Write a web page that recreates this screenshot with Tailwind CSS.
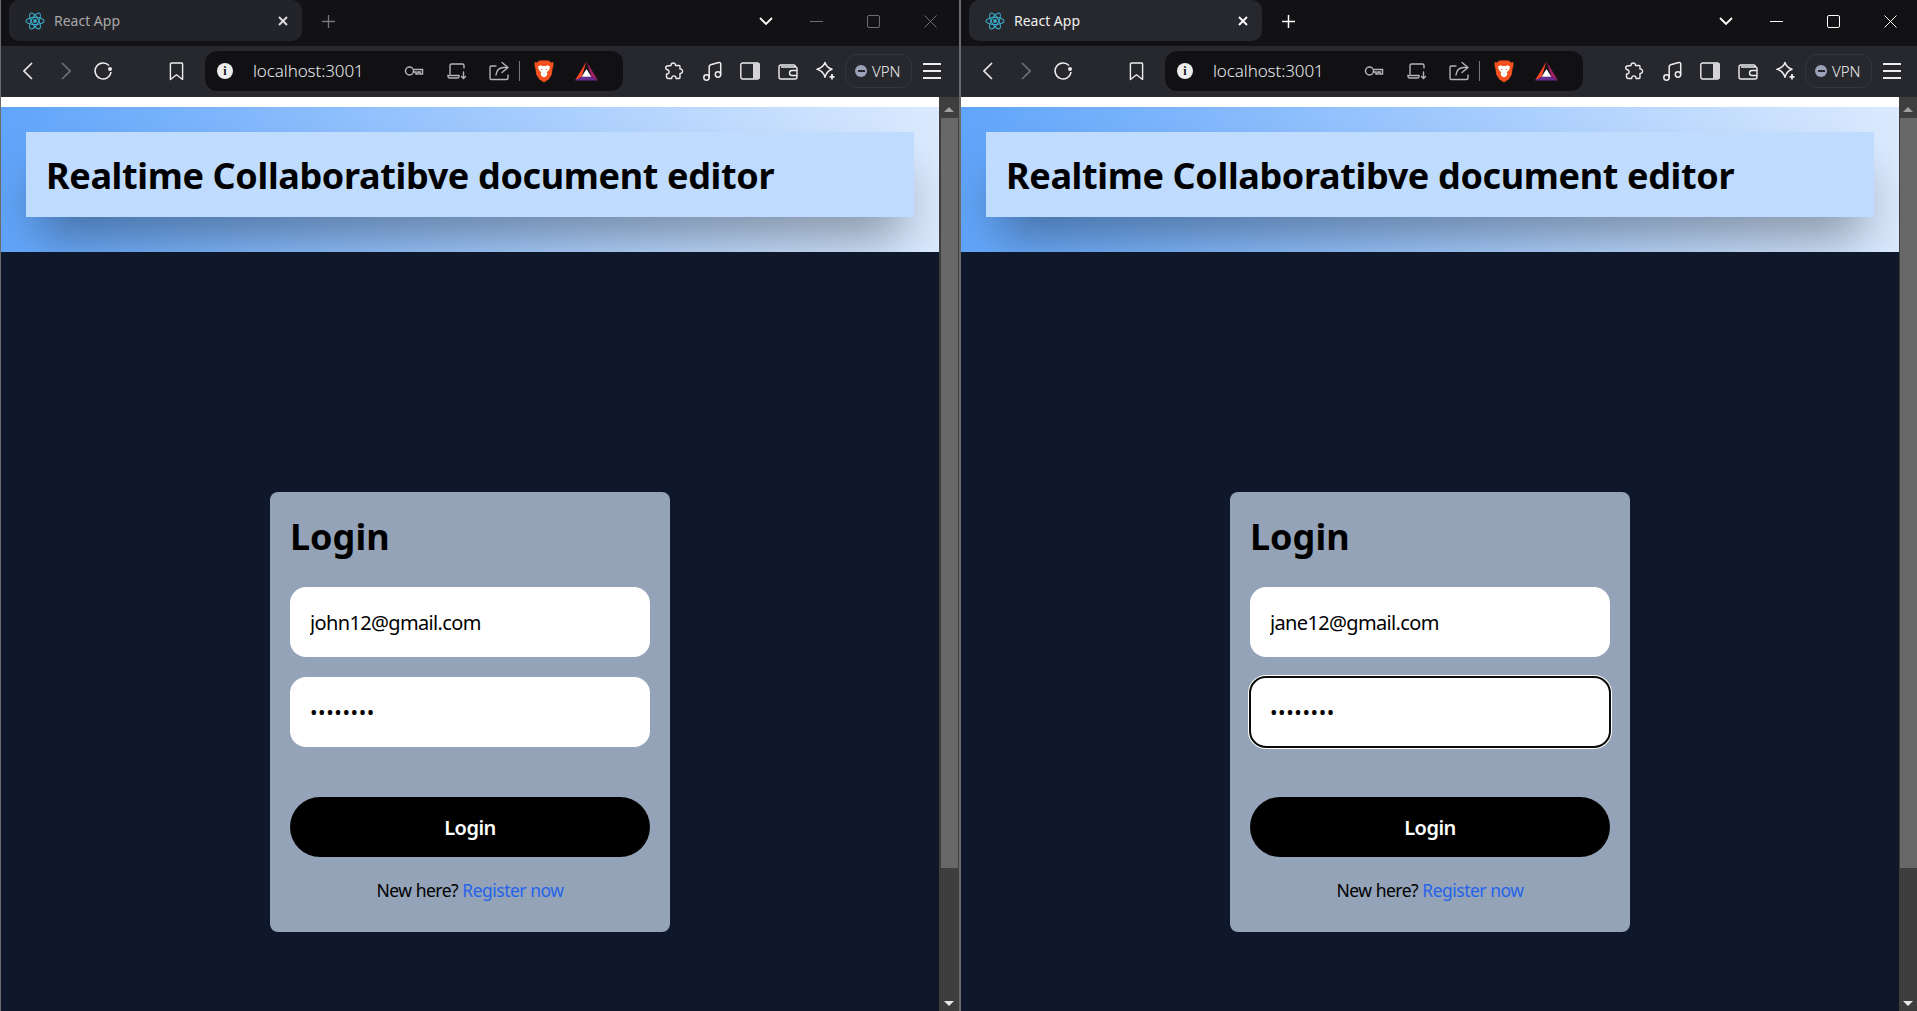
<!DOCTYPE html>
<html lang="en">
<head>
    <meta charset="UTF-8">
    <title>React App</title>
    <script src="https://cdn.jsdelivr.net/npm/@tailwindcss/browser@4"></script>
</head>
<body class="bg-[#6b6b6b] overflow-hidden font-['Noto_Sans',sans-serif]">
    <!-- Shared icons -->
    <svg class="hidden">
        <symbol id="react" viewBox="0 0 20 20">
            <g fill="none" stroke="#3aa6c4" stroke-width="1.1">
                <ellipse cx="10" cy="10" rx="9" ry="3.6"/>
                <ellipse cx="10" cy="10" rx="9" ry="3.6" transform="rotate(60 10 10)"/>
                <ellipse cx="10" cy="10" rx="9" ry="3.6" transform="rotate(120 10 10)"/>
            </g>
            <circle cx="10" cy="10" r="2" fill="#3aa6c4"/>
        </symbol>
        <symbol id="key" viewBox="0 0 20 14" fill="none" stroke="currentColor" stroke-width="1.5">
            <circle cx="5.5" cy="7" r="4"/>
            <path d="M9.5 5.5h9v4.5h-2.5v-2h-2v2h-2v-2h-2.5"/>
        </symbol>
        <symbol id="laptop" viewBox="0 0 20 18" fill="none" stroke="currentColor" stroke-width="1.4" stroke-linecap="round">
            <path d="M17 6V3.500A1.500 1.500 0 0 0 15.500 2H4.500a1.500 1.500 0 0 0-1.500 1.500V12M1 13.500h11v1a1.500 1.500 0 0 1-1.500 1.500H2.500a1.500 1.500 0 0 1-1.500-1.500z"/>
            <path d="M16.500 10v6M14.500 14.500l2 2 2-2"/>
        </symbol>
        <symbol id="share" viewBox="0 0 20 20" fill="none" stroke="currentColor" stroke-width="1.4" stroke-linecap="round" stroke-linejoin="round">
            <path d="M7 5H2.500a1.500 1.500 0 0 0-1.500 1.500V17a1.500 1.500 0 0 0 1.500 1.500H17.500a1.500 1.500 0 0 0 1.500-1.500v-3"/>
            <path d="M13 1.500l6 5-6 5M19 6.500h-4c-5 0-7.500 3-8 7.500"/>
        </symbol>
        <symbol id="brave" viewBox="0 0 20 24">
            <path d="M5 .5h10l2 2.200 2.500-.5.500 3-1 3.300-1 7-3 4.500-5 3.500-5-3.500-3-4.500-1-7-1-3.300.5-3 2.500.5z" fill="#f4511e"/>
            <path d="M3.500 7l3-1.500 2 1 1.500-.5 1.500.5 2-1 3 1.500-1.500 4-2 1.500.5 3-2 2-1.500.5-1.500-.5-2-2 .5-3-2-1.500z" fill="#fff"/>
            <path d="M6.500 9.500h2.200l-1 1zM11.300 9.500h2.200l-1.200 1z" fill="#f4511e"/>
        </symbol>
        <symbol id="bat" viewBox="0 0 24 20">
            <path d="M12 0L0 20l7-4z" fill="#ff4724"/>
            <path d="M12 0l12 20-7-4z" fill="#9e1f63"/>
            <path d="M0 20h24l-7-4H7z" fill="#662d91"/>
            <path d="M12 8l5 8H7z" fill="#fff"/>
        </symbol>
        <symbol id="puzzle" viewBox="0 0 20 20" fill="none" stroke="currentColor" stroke-width="1.4" stroke-linejoin="round">
            <path d="M7 4.500C7 1.500 11.500 1 11.500 4.500h3.500a1 1 0 0 1 1 1V8c3-.5 3.800 4.500 0 4.500v4a1 1 0 0 1-1 1h-3c.3-3.500-4.500-3.500-4.300 0H4.500a2 2 0 0 1-2-2v-2.500c3.500.5 3.500-4.800 0-4.500a2 2 0 0 1 .5-3.500z"/>
        </symbol>
        <symbol id="music" viewBox="0 0 20 20" fill="none" stroke="currentColor" stroke-width="1.5">
            <circle cx="3.500" cy="16.500" r="2.700"/>
            <circle cx="15" cy="13.500" r="2.700"/>
            <path d="M6.200 16.500V5.500c0-1 .5-1.500 1.500-1.800l8-2.200c1-.3 2 0 2 1.500v10.500"/>
        </symbol>
        <symbol id="sidebar" viewBox="0 0 20 18">
            <rect x=".8" y="1" width="18.400" height="16" rx="2" fill="none" stroke="currentColor" stroke-width="1.400"/>
            <path d="M13 1h5a2 2 0 0 1 2 2v12a2 2 0 0 1-2 2h-5z" fill="#d4d4d6"/>
        </symbol>
        <symbol id="wallet" viewBox="0 0 20 18" fill="none" stroke="currentColor" stroke-width="1.400">
            <path d="M1 5a2 2 0 0 1 2-2h12.500a2 2 0 0 1 2 1.500M1 4.500V15a2 2 0 0 0 2 2h14a2 2 0 0 0 2-2V6.500a1.500 1.500 0 0 0-1.500-1.500H3"/>
            <path d="M19 8.500h-5a2 2 0 0 0 0 5h5"/>
        </symbol>
        <symbol id="leo" viewBox="0 0 20 20" fill="none" stroke="currentColor" stroke-width="1.500" stroke-linejoin="round">
            <path d="M9 1.500c1.200 4 2.800 5.500 7 6.800-3.500 1.200-5.800 3.500-7 8-1.200-4.500-3.500-6.800-8-8 4.500-1.300 6.800-2.800 8-6.800z"/>
            <path d="M16 13v5.500M13.500 15.800h5" stroke-width="1.800"/>
        </symbol>
        <symbol id="reload" viewBox="0 0 20 20" fill="none">
            <path d="M16 4.500A8 8 0 1 0 18 11" stroke="currentColor" stroke-width="1.500"/>
            <circle cx="17" cy="8" r="2" fill="currentColor"/>
        </symbol>
        <symbol id="bookmark" viewBox="0 0 16 20" fill="none" stroke="currentColor" stroke-width="1.500" stroke-linejoin="round">
            <path d="M2.500 1h11a1 1 0 0 1 1 1v16.500L8 13.500 1.500 18.500V2a1 1 0 0 1 1-1z"/>
        </symbol>
    </svg>

    <div class="flex h-screen pl-px gap-[2px]">
        <!-- Left window (inactive) -->
        <section class="w-[958px] shrink-0 flex flex-col bg-white overflow-hidden">
            <div class="h-[46px] shrink-0 bg-[#121215] flex items-center pl-2 text-[#a8a8aa]">
                <div class="w-[293px] h-[41px] -mt-[5px] rounded-[10px] bg-[#232429] flex items-center pl-4 pr-[14px]">
                    <svg class="w-[20px] h-[20px]"><use href="#react"/></svg>
                    <span class="ml-[9px] text-[14px] flex-1">React App</span>
                    <svg class="w-[10px] h-[10px] text-[#e0e0e0]" viewBox="0 0 10 10" fill="none" stroke="currentColor" stroke-width="1.800"><path d="M1 1l8 8M9 1l-8 8"/></svg>
                </div>
                <svg class="w-[13px] h-[13px] ml-[20px] -mt-[3px] text-[#77777a]" viewBox="0 0 13 13" fill="none" stroke="currentColor" stroke-width="1.300"><path d="M6.500 0v13M0 6.500h13"/></svg>
                <svg class="w-[14px] h-[9px] ml-auto -mt-[3px] text-white" viewBox="0 0 14 9" fill="none" stroke="currentColor" stroke-width="1.800"><path d="M1 1l6 6 6-6"/></svg>
                <div class="w-[13px] h-px ml-[37px] -mt-[3px] bg-[#6e6e70]"></div>
                <div class="w-[13px] h-[13px] ml-[44px] -mt-[3px] rounded-[2px] border border-[#6e6e70]"></div>
                <svg class="w-[13px] h-[13px] ml-[44px] mr-[22px] -mt-[3px] text-[#6e6e70]" viewBox="0 0 13 13" fill="none" stroke="currentColor" stroke-width="1"><path d="M.5.500l12 12M12.500.500l-12 12"/></svg>
            </div>
            <div class="h-[51px] shrink-0 bg-[#27282d] flex items-center pl-2 pb-px text-[#ededed]">
                <div class="w-[38px] flex justify-center"><svg class="w-[10px] h-[18px]" viewBox="0 0 10 18" fill="none" stroke="currentColor" stroke-width="1.600"><path d="M9 1L1 9l8 8"/></svg></div>
                <div class="w-[38px] flex justify-center text-[#6f7074]"><svg class="w-[10px] h-[18px]" viewBox="0 0 10 18" fill="none" stroke="currentColor" stroke-width="1.600"><path d="M1 1l8 8-8 8"/></svg></div>
                <div class="w-[36px] flex justify-center"><svg class="w-[20px] h-[20px]"><use href="#reload"/></svg></div>
                <div class="w-[38px] ml-[36px] flex justify-center"><svg class="w-[15px] h-[19px]"><use href="#bookmark"/></svg></div>
                <div class="w-[418px] h-[40px] ml-[10px] rounded-xl bg-[#111114] flex items-center pl-3">
                    <div class="w-[16px] h-[16px] rounded-full bg-[#ededed] text-[#111114] text-[12px] font-bold leading-[16px] text-center font-['Liberation_Serif',serif]">i</div>
                    <span class="w-[120px] ml-[20px] text-[17px] tracking-[-0.1px] font-light text-[#e8eaed]">localhost:3001</span>
                    <div class="w-[42px] ml-[20px] flex justify-center text-[#b4b4b6]"><svg class="w-[20px] h-[14px]"><use href="#key"/></svg></div>
                    <div class="w-[42px] ml-px flex justify-center text-[#b4b4b6]"><svg class="w-[20px] h-[18px]"><use href="#laptop"/></svg></div>
                    <div class="w-[41px] flex justify-center text-[#b4b4b6]"><svg class="w-[20px] h-[20px]"><use href="#share"/></svg></div>
                    <div class="w-px h-[20px] bg-[#77777a]"></div>
                    <div class="w-[48px] flex justify-center"><svg class="w-[20px] h-[23px]"><use href="#brave"/></svg></div>
                    <div class="w-[36px] flex justify-center"><svg class="w-[23px] h-[20px]"><use href="#bat"/></svg></div>
                </div>
                <div class="w-[38px] ml-[32px] flex justify-center"><svg class="w-[20px] h-[20px]"><use href="#puzzle"/></svg></div>
                <div class="w-[38px] flex justify-center"><svg class="w-[20px] h-[20px] ml-px"><use href="#music"/></svg></div>
                <div class="w-[38px] flex justify-center"><svg class="w-[20px] h-[18px]"><use href="#sidebar"/></svg></div>
                <div class="w-[38px] flex justify-center"><svg class="w-[20px] h-[18px]"><use href="#wallet"/></svg></div>
                <div class="w-[38px] flex justify-center"><svg class="w-[20px] h-[20px]"><use href="#leo"/></svg></div>
                <div class="w-[67px] h-[34px] rounded-xl border border-[#35363b] flex items-center pl-[9px] gap-[5px] text-[15px] font-light">
                    <div class="w-[12px] h-[12px] rounded-full bg-[#9aa3b8] flex items-center justify-center"><div class="w-[7px] h-[2px] bg-[#27282d]"></div></div>
                    <span>VPN</span>
                </div>
                <div class="w-[38px] ml-px flex flex-col items-center gap-[5px]">
                    <div class="w-[18px] h-[2px] bg-[#ededed]"></div>
                    <div class="w-[18px] h-[2px] bg-[#ededed]"></div>
                    <div class="w-[18px] h-[2px] bg-[#ededed]"></div>
                </div>
            </div>
            <div class="flex-1 flex min-h-0">
                <main class="w-[938px] shrink-0 flex flex-col pt-2.5">
                    <header class="h-[145px] shrink-0 bg-gradient-to-r from-[#60a5fa] to-[#dbeafe] px-[25px] pt-[25px]">
                        <div class="h-[85px] bg-[#bfdbfe] shadow-[0_30px_50px_-12px_rgb(0_0_0/0.38)] flex items-center pl-5">
                            <h1 class="pt-[3px] text-[36px] font-bold text-black tracking-[-0.35px]">Realtime Collaboratibve document editor</h1>
                        </div>
                    </header>
                    <div class="flex-1 bg-[#0f172a] flex justify-center pt-[240px]">
                        <form class="w-[400px] h-[440px] shrink-0 rounded-lg bg-[#94a3b8] p-5">
                            <h2 class="h-[75px] text-[36px] font-bold leading-[50px] text-black">Login</h2>
                            <input type="email" value="john12@gmail.com" class="block w-full h-[70px] rounded-2xl bg-white px-5 text-[20px] text-black tracking-[-0.65px]">
                            <input type="password" value="password" class="block w-full h-[70px] mt-5 pt-px rounded-2xl bg-white px-5 text-[20px] tracking-[0.6px] text-black">
                            <button type="button" class="block w-full h-[60px] mt-[50px] pt-px rounded-full bg-black text-[20px] font-semibold tracking-[-0.5px] text-white">Login</button>
                            <p class="mt-[20px] text-center text-[17.5px] text-black tracking-[-0.5px]">New here? <a href="#" class="text-[#2563eb]">Register now</a></p>
                        </form>
                    </div>
                </main>
                <div class="w-[20px] shrink-0 bg-[#3e3e3e] flex flex-col items-center pt-[10px] pb-[5px]">
                    <div class="w-0 h-0 border-x-[5px] border-x-transparent border-b-[5px] border-b-[#a0a0a0]"></div>
                    <div class="w-[17px] h-[750px] mt-[6px] bg-[#686868]"></div>
                    <div class="mt-auto w-0 h-0 border-x-[5px] border-x-transparent border-t-[5px] border-t-[#e8e8e8]"></div>
                </div>
            </div>
        </section>

        <!-- Right window (active) -->
        <section class="w-[956px] shrink-0 flex flex-col bg-white overflow-hidden">
            <div class="h-[46px] shrink-0 bg-[#121215] flex items-center pl-2 text-[#f0f0f0]">
                <div class="w-[293px] h-[41px] -mt-[5px] rounded-[10px] bg-[#27282d] flex items-center pl-4 pr-[14px]">
                    <svg class="w-[20px] h-[20px]"><use href="#react"/></svg>
                    <span class="ml-[9px] text-[14px] flex-1">React App</span>
                    <svg class="w-[10px] h-[10px] text-white" viewBox="0 0 10 10" fill="none" stroke="currentColor" stroke-width="1.800"><path d="M1 1l8 8M9 1l-8 8"/></svg>
                </div>
                <svg class="w-[13px] h-[13px] ml-[20px] -mt-[3px] text-white" viewBox="0 0 13 13" fill="none" stroke="currentColor" stroke-width="1.500"><path d="M6.500 0v13M0 6.500h13"/></svg>
                <svg class="w-[14px] h-[9px] ml-auto -mt-[3px] text-white" viewBox="0 0 14 9" fill="none" stroke="currentColor" stroke-width="1.800"><path d="M1 1l6 6 6-6"/></svg>
                <div class="w-[13px] h-px ml-[37px] -mt-[3px] bg-white"></div>
                <div class="w-[13px] h-[13px] ml-[44px] -mt-[3px] rounded-[2px] border border-white"></div>
                <svg class="w-[13px] h-[13px] ml-[44px] mr-[20px] -mt-[3px] text-white" viewBox="0 0 13 13" fill="none" stroke="currentColor" stroke-width="1"><path d="M.5.500l12 12M12.500.500l-12 12"/></svg>
            </div>
            <div class="h-[51px] shrink-0 bg-[#27282d] flex items-center pl-2 pb-px text-[#ededed]">
                <div class="w-[38px] flex justify-center"><svg class="w-[10px] h-[18px]" viewBox="0 0 10 18" fill="none" stroke="currentColor" stroke-width="1.600"><path d="M9 1L1 9l8 8"/></svg></div>
                <div class="w-[38px] flex justify-center text-[#6f7074]"><svg class="w-[10px] h-[18px]" viewBox="0 0 10 18" fill="none" stroke="currentColor" stroke-width="1.600"><path d="M1 1l8 8-8 8"/></svg></div>
                <div class="w-[36px] flex justify-center"><svg class="w-[20px] h-[20px]"><use href="#reload"/></svg></div>
                <div class="w-[38px] ml-[36px] flex justify-center"><svg class="w-[15px] h-[19px]"><use href="#bookmark"/></svg></div>
                <div class="w-[418px] h-[40px] ml-[10px] rounded-xl bg-[#111114] flex items-center pl-3">
                    <div class="w-[16px] h-[16px] rounded-full bg-[#ededed] text-[#111114] text-[12px] font-bold leading-[16px] text-center font-['Liberation_Serif',serif]">i</div>
                    <span class="w-[120px] ml-[20px] text-[17px] tracking-[-0.1px] font-light text-[#e8eaed]">localhost:3001</span>
                    <div class="w-[42px] ml-[20px] flex justify-center text-[#b4b4b6]"><svg class="w-[20px] h-[14px]"><use href="#key"/></svg></div>
                    <div class="w-[42px] ml-px flex justify-center text-[#b4b4b6]"><svg class="w-[20px] h-[18px]"><use href="#laptop"/></svg></div>
                    <div class="w-[41px] flex justify-center text-[#b4b4b6]"><svg class="w-[20px] h-[20px]"><use href="#share"/></svg></div>
                    <div class="w-px h-[20px] bg-[#77777a]"></div>
                    <div class="w-[48px] flex justify-center"><svg class="w-[20px] h-[23px]"><use href="#brave"/></svg></div>
                    <div class="w-[36px] flex justify-center"><svg class="w-[23px] h-[20px]"><use href="#bat"/></svg></div>
                </div>
                <div class="w-[38px] ml-[32px] flex justify-center"><svg class="w-[20px] h-[20px]"><use href="#puzzle"/></svg></div>
                <div class="w-[38px] flex justify-center"><svg class="w-[20px] h-[20px] ml-px"><use href="#music"/></svg></div>
                <div class="w-[38px] flex justify-center"><svg class="w-[20px] h-[18px]"><use href="#sidebar"/></svg></div>
                <div class="w-[38px] flex justify-center"><svg class="w-[20px] h-[18px]"><use href="#wallet"/></svg></div>
                <div class="w-[38px] flex justify-center"><svg class="w-[20px] h-[20px]"><use href="#leo"/></svg></div>
                <div class="w-[67px] h-[34px] rounded-xl border border-[#35363b] flex items-center pl-[9px] gap-[5px] text-[15px] font-light">
                    <div class="w-[12px] h-[12px] rounded-full bg-[#9aa3b8] flex items-center justify-center"><div class="w-[7px] h-[2px] bg-[#27282d]"></div></div>
                    <span>VPN</span>
                </div>
                <div class="w-[38px] ml-px flex flex-col items-center gap-[5px]">
                    <div class="w-[18px] h-[2px] bg-[#ededed]"></div>
                    <div class="w-[18px] h-[2px] bg-[#ededed]"></div>
                    <div class="w-[18px] h-[2px] bg-[#ededed]"></div>
                </div>
            </div>
            <div class="flex-1 flex min-h-0">
                <main class="w-[938px] shrink-0 flex flex-col pt-2.5">
                    <header class="h-[145px] shrink-0 bg-gradient-to-r from-[#60a5fa] to-[#dbeafe] px-[25px] pt-[25px]">
                        <div class="h-[85px] bg-[#bfdbfe] shadow-[0_30px_50px_-12px_rgb(0_0_0/0.38)] flex items-center pl-5">
                            <h1 class="pt-[3px] text-[36px] font-bold text-black tracking-[-0.35px]">Realtime Collaboratibve document editor</h1>
                        </div>
                    </header>
                    <div class="flex-1 bg-[#0f172a] flex justify-center pt-[240px]">
                        <form class="w-[400px] h-[440px] shrink-0 rounded-lg bg-[#94a3b8] p-5">
                            <h2 class="h-[75px] text-[36px] font-bold leading-[50px] text-black">Login</h2>
                            <input type="email" value="jane12@gmail.com" class="block w-full h-[70px] rounded-2xl bg-white px-5 text-[20px] text-black tracking-[-0.65px]">
                            <input type="password" value="password" class="block w-full h-[70px] mt-5 pt-px rounded-2xl bg-white px-5 text-[20px] tracking-[0.6px] text-black outline-2 -outline-offset-1 outline-[#0a0a0a] shadow-[0_0_0_2px_#fff]">
                            <button type="button" class="block w-full h-[60px] mt-[50px] pt-px rounded-full bg-black text-[20px] font-semibold tracking-[-0.5px] text-white">Login</button>
                            <p class="mt-[20px] text-center text-[17.5px] text-black tracking-[-0.5px]">New here? <a href="#" class="text-[#2563eb]">Register now</a></p>
                        </form>
                    </div>
                </main>
                <div class="w-[18px] shrink-0 bg-[#3e3e3e] flex flex-col items-center pt-[10px] pb-[5px]">
                    <div class="w-0 h-0 border-x-[5px] border-x-transparent border-b-[5px] border-b-[#a0a0a0]"></div>
                    <div class="w-[17px] h-[750px] mt-[6px] bg-[#686868]"></div>
                    <div class="mt-auto w-0 h-0 border-x-[5px] border-x-transparent border-t-[5px] border-t-[#e8e8e8]"></div>
                </div>
            </div>
        </section>
    </div>
</body>
</html>
